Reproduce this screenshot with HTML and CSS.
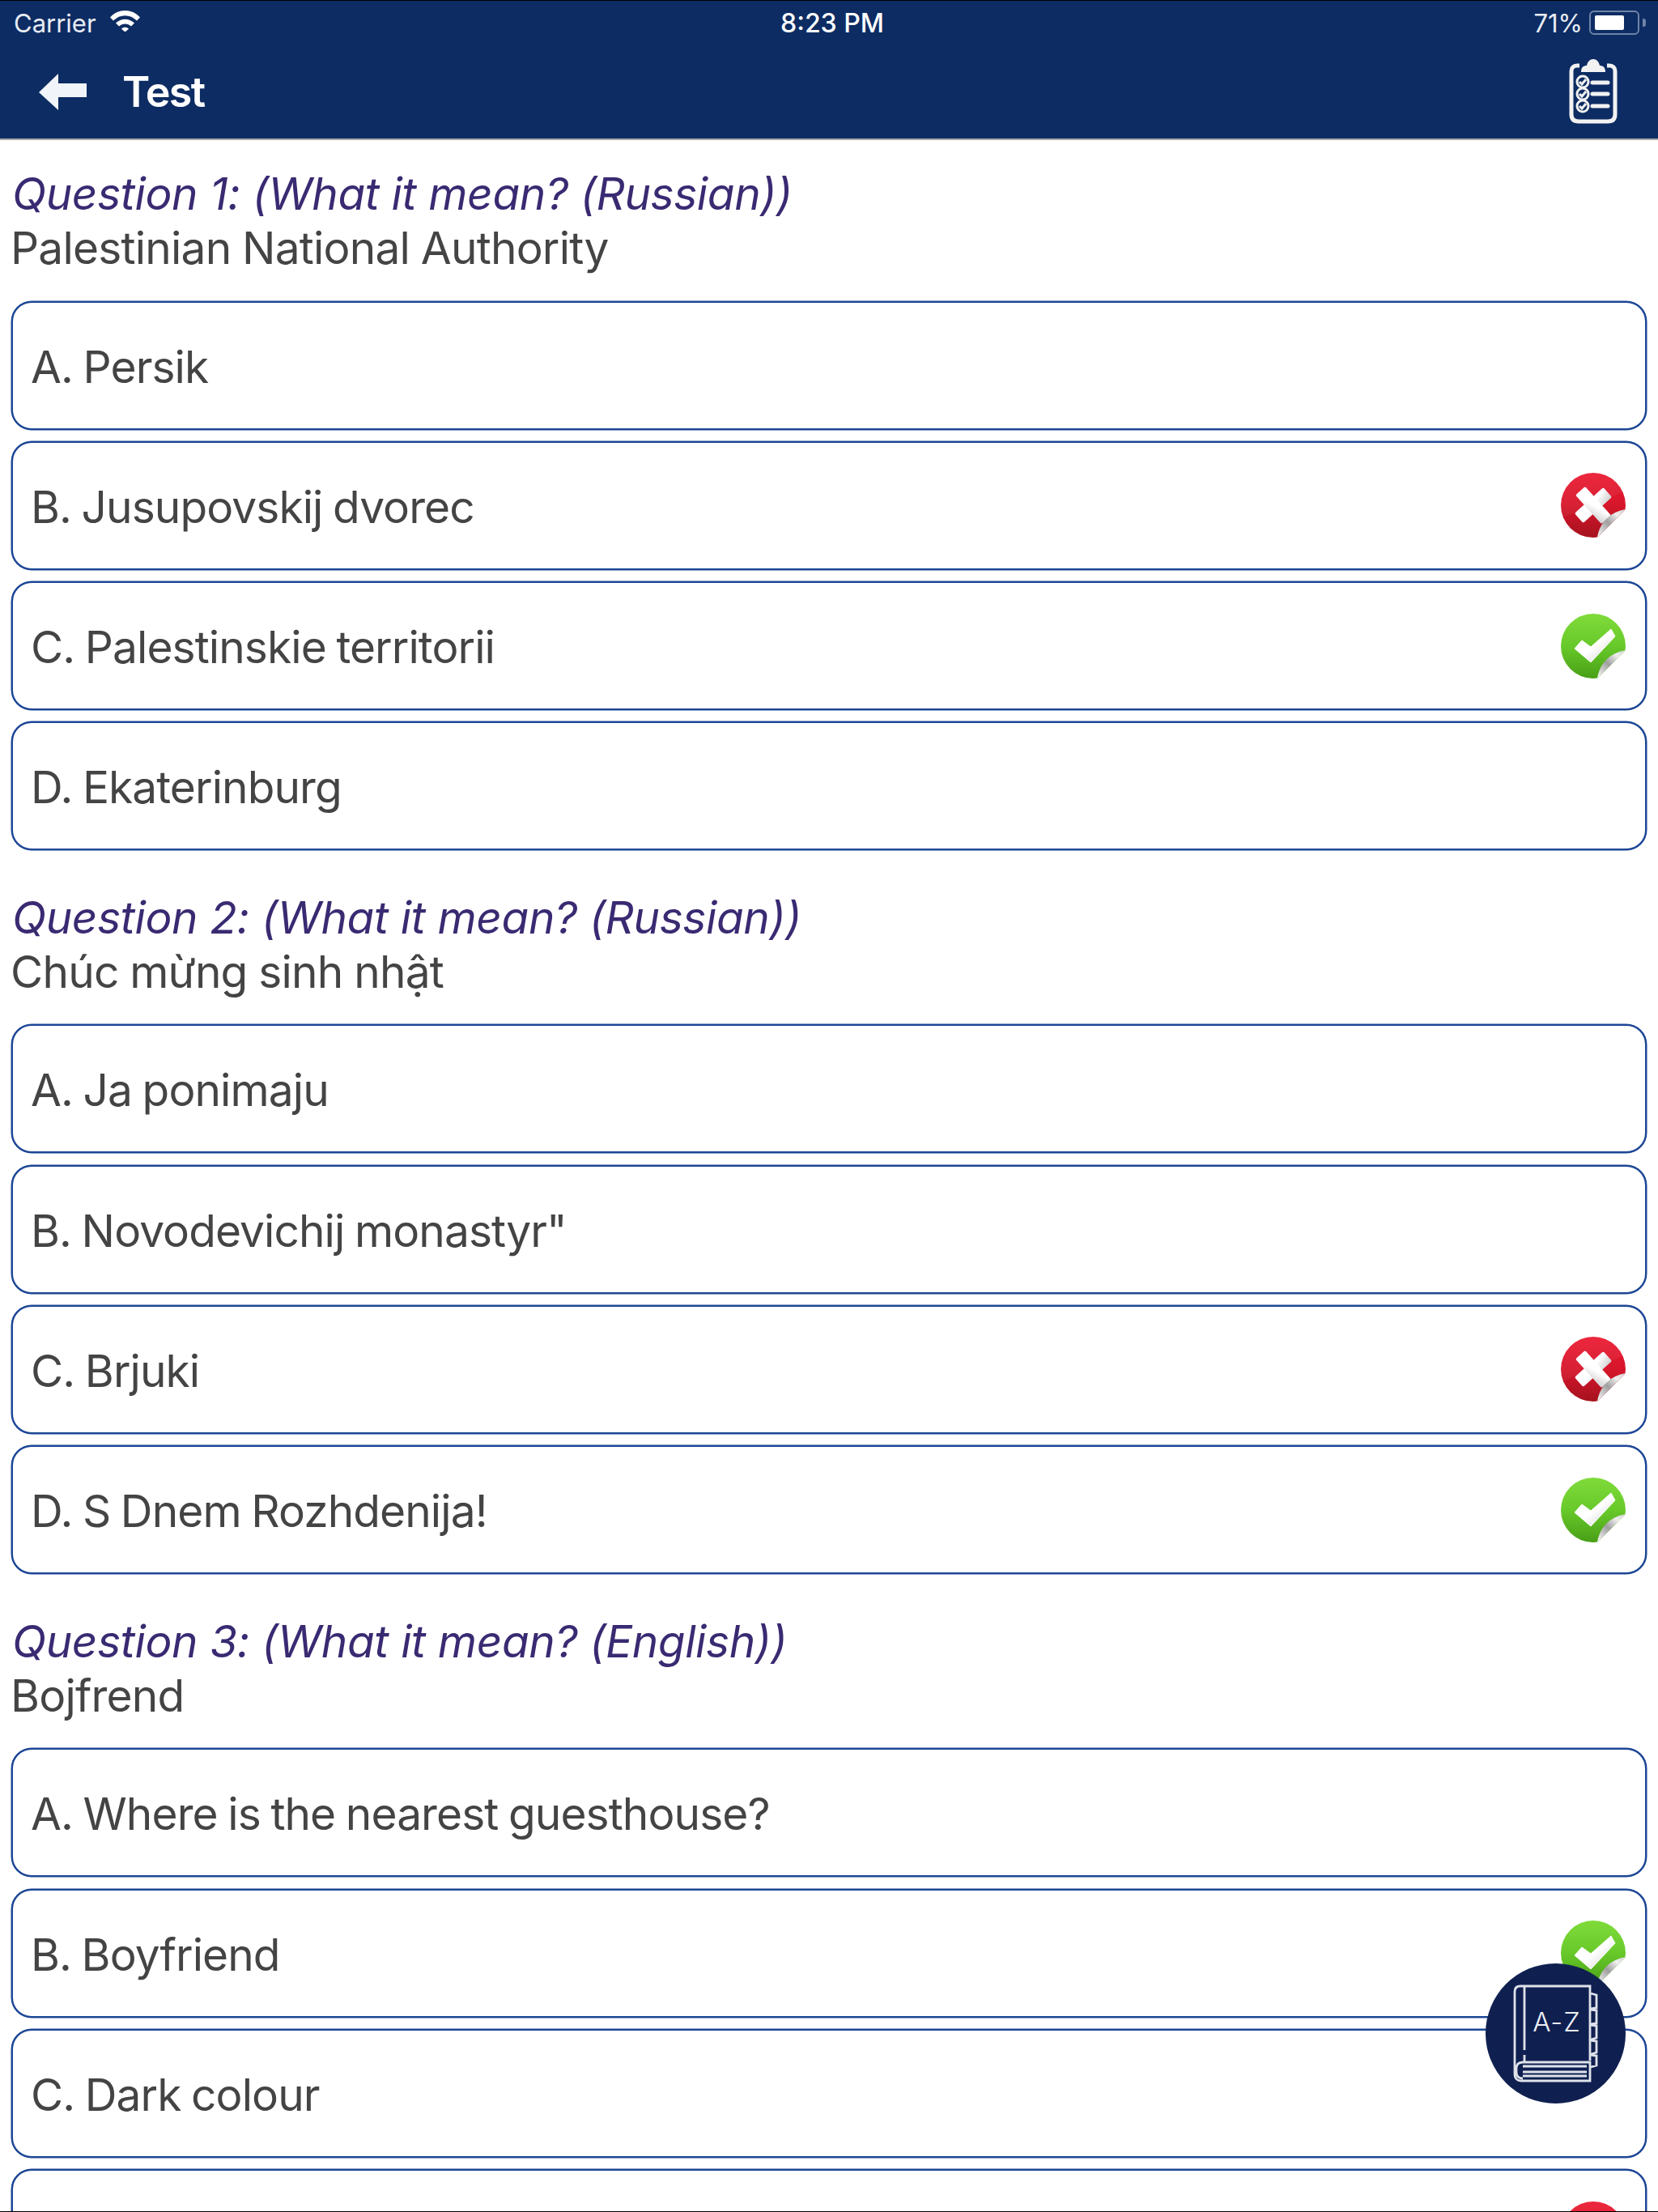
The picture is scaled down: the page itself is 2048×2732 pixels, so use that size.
FILE: index.html
```html
<!DOCTYPE html>
<html lang="en">
<head>
<meta charset="utf-8">
<title>Test</title>
<link rel="stylesheet" href="styles.css">
</head>
<body>
<svg class="sprites" aria-hidden="true">
  <defs>
    <linearGradient id="redFill" x1="0" y1="0" x2="0" y2="1">
      <stop offset="0" stop-color="#ec1c33"/><stop offset=".5" stop-color="#d6162b"/><stop offset="1" stop-color="#a5121f"/>
    </linearGradient>
    <linearGradient id="greenFill" x1="0" y1="0" x2="0" y2="1">
      <stop offset="0" stop-color="#7fdb3a"/><stop offset=".5" stop-color="#68c92a"/><stop offset="1" stop-color="#489f16"/>
    </linearGradient>
    <linearGradient id="markFill" x1="0" y1="0" x2="1" y2="1">
      <stop offset=".5" stop-color="#ffffff"/><stop offset="1" stop-color="#cfcfcf"/>
    </linearGradient>
    <linearGradient id="peelFill" x1="0" y1="1" x2="1" y2="0">
      <stop offset="0" stop-color="#ffffff"/><stop offset=".45" stop-color="#9f9f9f"/><stop offset=".75" stop-color="#efefef"/><stop offset="1" stop-color="#cfcfcf"/>
    </linearGradient>
    <clipPath id="stickerClip"><path d="M0 0H80V45L45 80H0Z"/></clipPath>
    <symbol id="wrong" viewBox="0 0 80 80">
      <g clip-path="url(#stickerClip)">
        <circle cx="40" cy="40" r="40" fill="url(#redFill)"/>
        <path d="M0 40A40 40 0 0 1 80 22L0 56Z" fill="#fff" opacity=".05"/>
        <g fill="url(#markFill)">
          <rect x="16" y="32" width="48" height="16" rx="2" transform="rotate(-42 40 40)"/>
          <rect x="16" y="32" width="48" height="16" rx="2" transform="rotate(48 40 40)"/>
        </g>
      </g>
      <path d="M80 45C62 48 48 60 45 80Z" fill="url(#peelFill)"/>
    </symbol>
    <symbol id="right" viewBox="0 0 80 80">
      <g clip-path="url(#stickerClip)">
        <circle cx="40" cy="40" r="40" fill="url(#greenFill)"/>
        <path d="M17 43L26 33L37 41L62 19L67 28L37 60Z" fill="url(#markFill)" stroke="#fff" stroke-width="1" stroke-linejoin="round"/>
      </g>
      <path d="M80 45C62 48 48 60 45 80Z" fill="url(#peelFill)"/>
    </symbol>
  </defs>
</svg>

<div class="page">
  <header class="top">
    <div class="status">
      <div class="status-left">
        <span>Carrier</span>
        <svg class="wifi" viewBox="0 0 37 26"><path d="M0 8.500C10-2.800 27-2.800 37 8.500L33 12.600C25 4 12 4 4 12.600Z"/><path d="M7 15.600C13.500 9 23.500 9 30 15.600L26 19.600C22 15.300 15 15.300 11 19.600Z"/><path d="M14 22.700C16.500 20.200 20.500 20.200 23 22.700L18.500 26.500Z"/></svg>
      </div>
      <span class="clock">8:23 PM</span>
      <div class="status-right">
        <span>71%</span>
        <span class="battery"><span class="battery-level"></span></span>
        <span class="battery-nub"></span>
      </div>
    </div>
    <nav class="nav">
      <svg class="back" viewBox="0 0 59 45"><path d="M0 23L24 0V12H59V29H24V45Z"/></svg>
      <h1 class="nav-title">Test</h1>
      <svg class="clipboard" viewBox="0 0 60 80">
        <path class="clip-body" d="M13 8H10C5.500 8 3 11 3 15V68C3 74 6 77 12 77H48C54 77 57 74 57 68V15C57 11 54.500 8 50 8H47"/>
        <path class="clip-cap" d="M15 16C15 10 18 8 22 8C23 3 26 0 30 0C34 0 37 3 38 8C42 8 45 10 45 16Z"/>
        <g class="clip-marks">
          <circle cx="17" cy="28" r="7"/><circle cx="17" cy="43" r="7"/><circle cx="17" cy="58" r="7"/>
          <path d="M13 28L16 31L21 25M13 43L16 46L21 40M13 58L16 61L21 55"/>
        </g>
        <path class="clip-lines" d="M29 29H48M29 43H48M29 58H48"/>
      </svg>
    </nav>
  </header>

  <main>
    <section class="question">
      <h2 class="q-title">Question 1: (What it mean? (Russian))</h2>
      <p class="q-word">Palestinian National Authority</p>
      <ul class="options">
        <li class="option">A. Persik</li>
        <li class="option">B. Jusupovskij dvorec<svg class="mark"><use href="#wrong"/></svg></li>
        <li class="option">C. Palestinskie territorii<svg class="mark"><use href="#right"/></svg></li>
        <li class="option">D. Ekaterinburg</li>
      </ul>
    </section>
    <section class="question">
      <h2 class="q-title">Question 2: (What it mean? (Russian))</h2>
      <p class="q-word">Chúc mừng sinh nhật</p>
      <ul class="options">
        <li class="option">A. Ja ponimaju</li>
        <li class="option">B. Novodevichij monastyr"</li>
        <li class="option">C. Brjuki<svg class="mark"><use href="#wrong"/></svg></li>
        <li class="option">D. S Dnem Rozhdenija!<svg class="mark"><use href="#right"/></svg></li>
      </ul>
    </section>
    <section class="question">
      <h2 class="q-title">Question 3: (What it mean? (English))</h2>
      <p class="q-word">Bojfrend</p>
      <ul class="options">
        <li class="option">A. Where is the nearest guesthouse?</li>
        <li class="option">B. Boyfriend<svg class="mark"><use href="#right"/></svg></li>
        <li class="option">C. Dark colour</li>
        <li class="option option-end"><svg class="mark"><use href="#wrong"/></svg></li>
      </ul>
    </section>
  </main>

  <button class="fab" type="button" aria-label="Dictionary">
    <svg class="book" viewBox="0 0 173 173">
      <g class="book-lines">
        <path d="M48 107V28M48 28H129V120M48 28H43C38 28 36 31 36 35V137C36 142 39 145 44 145H129V122H46C40 122 38 125 38 131V134C38 140 41 142 46 142"/>
        <path d="M48 113V121M46 127H125M46 134H125M46 139H125"/>
        <path d="M130 37L137 39V55L130 56M130 57L137 58V74L130 75M130 76L137 77V92L130 94M130 95L137 96V110L130 112M130 113L137 114V126L130 128"/>
      </g>
      <text class="book-text" x="88" y="84" text-anchor="middle">A-Z</text>
    </svg>
  </button>
</div>
</body>
</html>
```

FILE: styles.css
```css
* { box-sizing: border-box; }

html, body { margin: 0; padding: 0; background: #fff; }

.sprites { position: absolute; width: 0; height: 0; }

.page {
  position: relative;
  width: 2048px;
  height: 2732px;
  overflow: hidden;
  background: #fff;
  border-top: 1px solid #000;
  border-bottom: 1px solid #000;
  font-family: Inter, "Noto Sans", sans-serif;
  color: #444;
}

.top {
  background: #0d2c63;
  border-bottom: 2px solid #a6a6a6;
  color: #fff;
}

.status {
  display: grid;
  grid-template-columns: 1fr auto 1fr;
  align-items: center;
  height: 54px;
  padding: 0 15px 0 17px;
  font-size: 31px;
  color: #e8ecf3;
}

.status-left { display: flex; align-items: center; gap: 17px; }
.wifi { width: 37px; height: 26px; fill: #fff; margin-top: -4px; }

.clock { font-size: 32px; font-weight: 500; color: #fff; margin-left: 6px; }

.status-right {
  display: flex;
  align-items: center;
  justify-content: flex-end;
  gap: 8px;
}

.battery {
  display: block;
  width: 62px;
  height: 30px;
  padding: 4px 17px 4px 5px;
  border: 2px solid #6f84a8;
  border-radius: 6px;
}

.battery-level { display: block; height: 100%; background: #fff; border-radius: 2px; }

.battery-nub {
  width: 4px;
  height: 10px;
  margin-left: -4px;
  background: #6f84a8;
  border-radius: 0 3px 3px 0;
}

.nav {
  display: flex;
  align-items: center;
  height: 116px;
  padding: 0 50px 0 48px;
}

.back { width: 59px; height: 45px; fill: #f1f4f8; }

.nav-title {
  flex: 1;
  margin: 0 0 0 44px;
  font-size: 52px;
  font-weight: 600;
  letter-spacing: -1.600px;
  color: #fff;
}

.clipboard { width: 60px; height: 80px; }
.clip-body { fill: none; stroke: #f2f2f2; stroke-width: 5; }
.clip-cap { fill: #f2f2f2; }
.clip-marks { fill: none; stroke: #f2f2f2; stroke-width: 3; }
.clip-lines { fill: none; stroke: #f2f2f2; stroke-width: 5; stroke-linecap: round; }

main { display: block; }

.question { padding: 33px 14px 16.500px; }

.q-title,
.q-word {
  margin: 0;
  font-size: 55px;
  line-height: 67px;
  font-weight: 400;
}

.q-title { font-style: italic; color: #3a2a72; margin-left: 1px; letter-spacing: -0.380px; }
.q-word { color: #444; margin-left: -1px; margin-bottom: 31.500px; letter-spacing: -0.780px; word-spacing: -1px; }

.options {
  display: flex;
  flex-direction: column;
  gap: 14.300px;
  margin: 0;
  padding: 0;
  list-style: none;
}

.option {
  display: flex;
  align-items: center;
  justify-content: space-between;
  height: 159px;
  padding: 3px 24px 0 22px;
  border: 2px solid #1d4796;
  border-radius: 25px;
  box-shadow: 0 0 0 0.500px #1d4796;
  background: #fff;
  font-size: 55px;
  letter-spacing: -0.900px;
  word-spacing: -2px;
}

.option-end { justify-content: flex-end; }

.mark { width: 80px; height: 80px; flex: none; margin-top: -3px; }

.fab {
  position: absolute;
  left: 1835px;
  top: 2424px;
  width: 173px;
  height: 173px;
  padding: 0;
  border: 0;
  border-radius: 50%;
  background: #0f2050;
}

.book { display: block; width: 173px; height: 173px; }
.book-lines { fill: none; stroke: #dfe2ea; stroke-width: 2.800; }
.book-text { fill: #eef0f5; font-family: Inter, sans-serif; font-size: 33px; font-weight: 300; letter-spacing: 1px; }
```
